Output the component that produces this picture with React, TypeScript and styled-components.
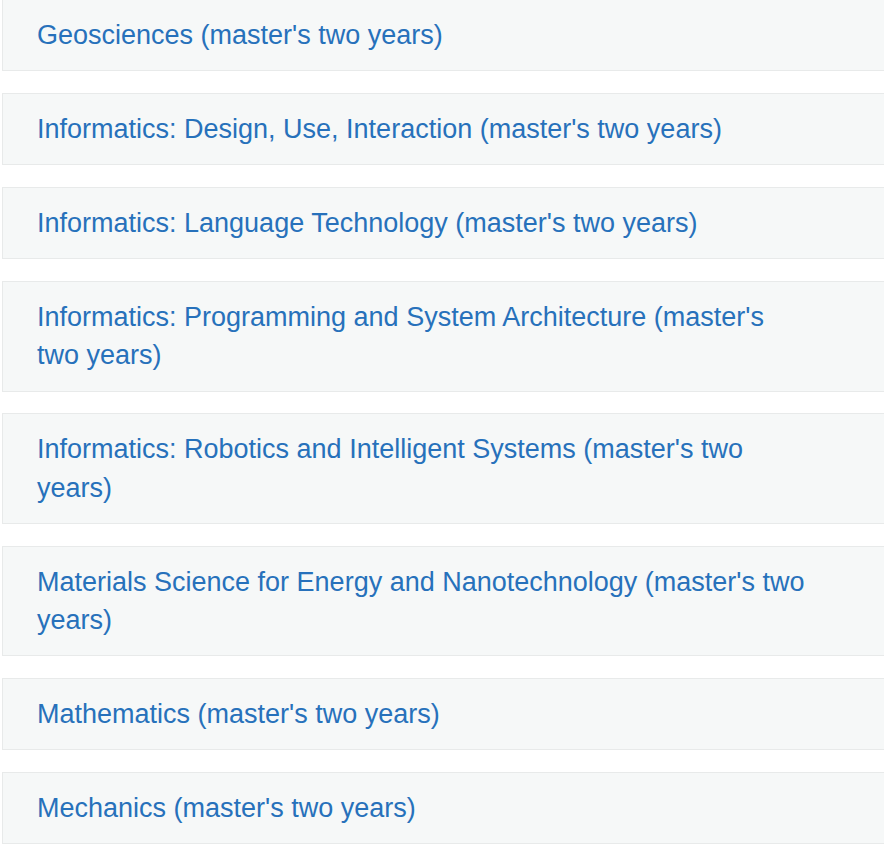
import styled, { createGlobalStyle } from "styled-components";

const GlobalStyle = createGlobalStyle`
  html, body {
    margin: 0;
    padding: 0;
    background: #fff;
    overflow: hidden;
  }
  body {
    font-family: "Liberation Sans", Arial, sans-serif;
  }
`;

const programmes = [
  "Geosciences (master's two years)",
  "Informatics: Design, Use, Interaction (master's two years)",
  "Informatics: Language Technology (master's two years)",
  "Informatics: Programming and System Architecture (master's two years)",
  "Informatics: Robotics and Intelligent Systems (master's two years)",
  "Materials Science for Energy and Nanotechnology (master's two years)",
  "Mathematics (master's two years)",
  "Mechanics (master's two years)",
];

const App = () => {
  return (
    <>
      <GlobalStyle />
      <List>
        {programmes.map((name) => (
          <Card key={name}>
            <Label href="#">{name}</Label>
          </Card>
        ))}
      </List>
    </>
  );
};

export default App;

const List = styled.ul`
  list-style: none;
  margin: -1px 0 0 2px;
  padding: 0;
  width: 920px;
  display: flex;
  flex-direction: column;
  gap: 21.66px;
`;

const Card = styled.li`
  background: #f6f8f8;
  border: 1px solid #e8eaea;
  padding: 16px 34px;
`;

const Label = styled.a`
  display: block;
  max-width: 770px;
  color: #2771bb;
  font-size: 27px;
  line-height: 38.34px;
  text-decoration: none;
`;
